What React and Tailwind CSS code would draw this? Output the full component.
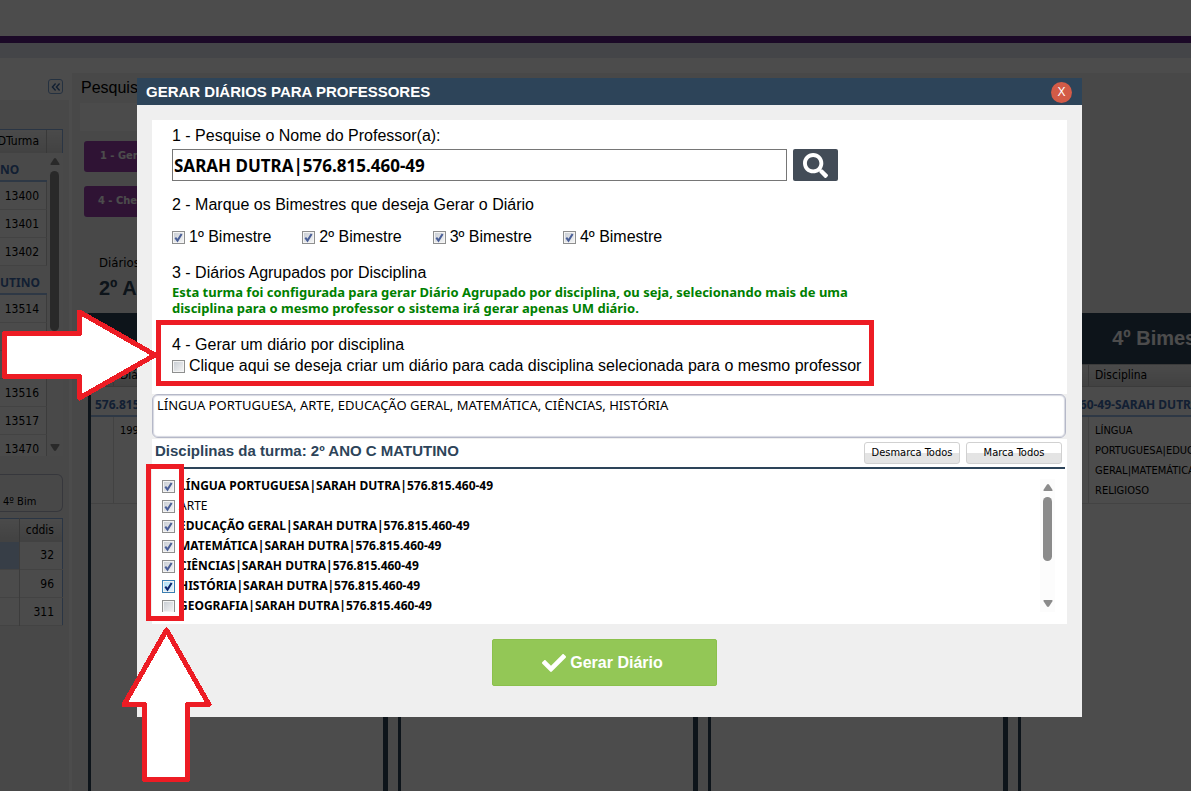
import { useState } from "react";
import { FaCheck, FaSearch } from "react-icons/fa";
import clsx from "clsx";

const bimestres = ["1º Bimestre", "2º Bimestre", "3º Bimestre", "4º Bimestre"];

const professor = "SARAH DUTRA|576.815.460-49";

const disciplinas = [
  { name: "LÍNGUA PORTUGUESA", professor, checked: true },
  { name: "ARTE", checked: true },
  { name: "EDUCAÇÃO GERAL", professor, checked: true },
  { name: "MATEMÁTICA", professor, checked: true },
  { name: "CIÊNCIAS", professor, checked: true },
  { name: "HISTÓRIA", professor, checked: true, active: true },
  { name: "GEOGRAFIA", professor, checked: false },
];

const turmas = [
  { turno: "MATUTINO", short: "NO", ids: ["13400", "13401", "13402"] },
  { turno: "VESPERTINO", short: "UTINO", ids: ["13514", "", "", "13516", "13517", "13470"] },
];

/* ================= CHECKBOX ================= */
const Checkbox = ({ id, defaultChecked, active }) => (
  <span className="relative block size-[13px] shrink-0">
    <input
      id={id}
      type="checkbox"
      defaultChecked={defaultChecked}
      className={clsx(
        "peer block size-[13px] appearance-none border bg-linear-to-br shadow-[inset_0_0_0_1px_#f4f4f4]",
        active
          ? "border-[#3c7fb1] from-[#a9dcf6] to-[#e3f5fd]"
          : "border-[#8e8f8f] from-[#c6cbd2] to-[#f6f6f6]"
      )}
    />
    <svg
      viewBox="0 0 13 13"
      className={clsx(
        "pointer-events-none absolute inset-0 hidden size-[13px] peer-checked:block",
        active ? "text-[#0a246e]" : "text-[#4a5f97]"
      )}
    >
      <path
        d="M3.3 6.6 L5.5 9.6 L9.6 3"
        fill="none"
        stroke="currentColor"
        strokeWidth="2"
      />
    </svg>
  </span>
);

const ScrollBar = ({ className, thumb }) => (
  <div className={clsx("flex w-[15px] shrink-0 flex-col items-center bg-[#fcfcfc] py-[5px]", className)}>
    <svg viewBox="0 0 10 7" className="h-[7px] w-[10px] fill-[#8b8b8b]">
      <path d="M5 0 L6 .6 L9.6 6 Q9.6 7 9 7 H1 Q.4 7 .4 6 L4 .6Z" />
    </svg>
    <div className={clsx("mt-1.5 w-[9px] rounded-full bg-[#8b8b8b]", thumb)} />
    <svg viewBox="0 0 10 7" className="mt-auto h-[7px] w-[10px] fill-[#8b8b8b]">
      <path d="M5 7 L6 6.4 L9.6 1 Q9.6 0 9 0 H1 Q.4 0 .4 1 L4 6.4Z" />
    </svg>
  </div>
);

/* ================= SIDEBAR ================= */
const Sidebar = () => (
  <aside className="flex w-[69px] shrink-0 flex-col bg-[#f0f0f0] text-xs">
    <div className="flex h-[27px] items-center justify-end bg-white pr-1.5">
      <button
        aria-label="Recolher"
        className="flex size-[15px] items-center justify-center rounded-[3px] border border-[#7ba3d6]"
      >
        <svg viewBox="0 0 10 10" className="size-[10px] fill-none stroke-[#3c69a6] stroke-[1.4]">
          <path d="M4.6 1.5 L1.4 5 L4.6 8.5 M8.6 1.5 L5.4 5 L8.6 8.5" />
        </svg>
      </button>
    </div>

    {/* Turmas */}
    <div className="mt-[29px] mr-1.5 border-t border-r border-[#8db2e3] bg-white">
      <div className="flex h-[23px] bg-linear-to-b from-[#f9f9f9] to-[#dcdcdc] leading-[23px]">
        <div className="flex w-[47px] justify-end overflow-hidden border-r border-[#c0c0c0] pr-[7px]">
          IDTurma
        </div>
      </div>
    </div>
    <div className="mr-1.5 flex h-[303px] overflow-hidden bg-[#f5f5f5]">
      <div className="w-[47px] shrink-0">
        {turmas.map((group) => (
          <div key={group.turno}>
            <div className="flex h-[29px] items-end border-b-2 border-[#99bbe8] pb-0.5 font-['Noto_Sans',sans-serif] text-xs font-bold text-[#3e6aaa]">
              {group.short}
            </div>
            {group.ids.map((id, i) => (
              <div
                key={i}
                className="h-7 border-r border-b border-r-[#c8c8c8] border-b-[#e2e2e2] bg-[#fafafa] pr-[7px] text-right leading-7"
              >
                {id}
              </div>
            ))}
          </div>
        ))}
      </div>
      <ScrollBar className="bg-transparent" thumb="h-[160px]" />
    </div>

    <div className="mt-[18px] mr-1.5 flex h-[38px] items-end rounded-r-md border-t border-r border-b border-[#b5b8c8] pb-px pl-[3px] text-[11px]">
      4º Bim
    </div>

    {/* Disciplinas da turma */}
    <table className="mt-1.5 mr-1.5 border-t border-r border-[#8db2e3]">
      <thead>
        <tr className="h-[23px] bg-linear-to-b from-[#f9f9f9] to-[#dcdcdc]">
          <th className="w-[19px] border-r border-[#c0c0c0]" />
          <th className="pr-2 text-right font-normal">cddis</th>
        </tr>
      </thead>
      <tbody>
        {[32, 96, 311].map((cd, i) => (
          <tr key={cd} className="h-7 border-b border-[#e0e0e0] bg-[#fafafa]">
            <td className={clsx("border-r border-[#c8c8c8]", i === 0 && "bg-[#b8cfee]")} />
            <td className="pr-2 text-right">{cd}</td>
          </tr>
        ))}
      </tbody>
    </table>
  </aside>
);

/* ================= CARD BIMESTRE ================= */
const BimestreCard = ({ title }) => (
  <section className="w-[300px] shrink-0 border-r-[5px] border-l-[3px] border-[#2d4459] bg-white text-[11px]">
    <h2 className="h-[51px] bg-[#2d4459] text-center font-['Liberation_Sans',sans-serif] text-xl leading-[50px] font-bold text-white">
      {title}
    </h2>
    <div className="flex h-[23px] border-t border-b border-[#c5c5c5] bg-linear-to-b from-[#f9f9f9] to-[#dcdcdc] text-xs leading-[21px]">
      <span className="w-[23px] border-r border-[#c0c0c0]" />
      <span className="w-[45px] border-r border-[#c0c0c0] pl-1.5">Diário</span>
      <span className="pl-1.5">Disciplina</span>
    </div>
    <p className="h-[30px] overflow-hidden border-b-2 border-[#99bbe8] bg-[#fafafa] pl-1 font-['Noto_Sans',sans-serif] text-xs leading-9 font-bold whitespace-nowrap text-[#3e6aaa]">
      576.815.460-49-SARAH DUTRA
    </p>
    <div className="flex h-[87px] border-b border-[#e0e0e0] leading-5">
      <span className="w-[23px] border-r border-[#dcdcdc]" />
      <span className="w-[45px] overflow-hidden border-r border-[#dcdcdc] pt-1 pl-1.5">19983</span>
      <p className="flex-1 pt-1 pl-1.5">
        LÍNGUA
        <br />
        PORTUGUESA|EDUCAÇÃO
        <br />
        GERAL|MATEMÁTICA|ENSINO
        <br />
        RELIGIOSO
      </p>
    </div>
  </section>
);

const Background = () => (
  <div className="flex h-full flex-col bg-white text-black">
    <div className="h-9" />
    <div className="h-[7px] bg-[#5b2182]" />
    <div className="h-[15px] bg-[#e3e6f1]" />
    <div className="h-[15px]" />
    <div className="flex min-h-0 flex-1">
      <Sidebar />
      <main className="ml-[3px] flex min-w-0 flex-1 flex-col bg-[#f0f0f0]">
        <h1 className="h-[30px] pl-[9px] font-['Liberation_Sans',sans-serif] text-base leading-[30px]">
          Pesquisar
        </h1>
        <div className="mx-2 h-7 w-80 bg-[#fcfcfc]" />
        <div className="mt-2.5 ml-3 flex flex-col items-start gap-3.5 text-[11px] font-bold text-white">
          <button className="h-[31px] rounded-[3px] bg-[#9e40b0] px-4">1 - Gerar Diários</button>
          <button className="h-[31px] rounded-[3px] bg-[#9e40b0] px-3.5">4 - Checar Diários</button>
        </div>
        <p className="mt-[38px] ml-[27px] text-[13px] leading-4">Diários da turma</p>
        <p className="mt-[3px] ml-[27px] h-[39px] font-['Liberation_Sans',sans-serif] text-xl font-bold text-[#2d4459]">
          2º ANO C MATUTINO
        </p>
        <div className="flex min-h-0 flex-1 gap-2.5 overflow-hidden pl-4">
          {bimestres.map((b) => (
            <BimestreCard key={b} title={b} />
          ))}
        </div>
      </main>
    </div>
  </div>
);

/* ================= MODAL ================= */
const DiarioModal = () => {
  const [nome, setNome] = useState("SARAH DUTRA|576.815.460-49");

  return (
    <div
      role="dialog"
      aria-labelledby="modal-title"
      className="relative mr-[109px] ml-[137px] bg-[#efefef] text-base text-black"
    >
      <header className="flex h-[27px] items-center justify-between bg-[#2d4459] pt-px pr-2.5 pl-[9px] text-white">
        <h2 id="modal-title" className="text-[15px] font-bold">
          GERAR DIÁRIOS PARA PROFESSORES
        </h2>
        <button className="size-[21px] rounded-full bg-[#d35b47] text-xs leading-[21px]">X</button>
      </header>

      <div className="px-[15px] pt-[15px]">
        <div className="bg-white">
          <div className="px-5 pt-1.5 pb-[17px] leading-5">
            <label htmlFor="professor" className="block">
              1 - Pesquise o Nome do Professor(a):
            </label>
            <div className="mt-[3px] flex gap-1.5">
              <input
                id="professor"
                value={nome}
                onChange={(e) => setNome(e.target.value)}
                className="h-8 w-[615px] border border-[#767676] px-px font-['Noto_Sans',sans-serif] text-[17px] font-bold"
              />
              <button
                aria-label="Pesquisar"
                className="flex h-8 w-[45px] items-center justify-center rounded-[2px] bg-[#434c57] text-white"
              >
                <FaSearch className="size-[25px]" />
              </button>
            </div>

            <p className="mt-3.5">2 - Marque os Bimestres que deseja Gerar o Diário</p>
            <div className="mt-3 flex gap-[31px]">
              {bimestres.map((b, i) => (
                <label key={b} htmlFor={`bim-${i}`} className="flex items-center gap-1">
                  <Checkbox id={`bim-${i}`} defaultChecked />
                  {b}
                </label>
              ))}
            </div>

            <p className="mt-4">3 - Diários Agrupados por Disciplina</p>
            <p className="mt-px w-[700px] font-['Noto_Sans',sans-serif] text-[13px] leading-4 font-bold text-[#008000]">
              Esta turma foi configurada para gerar Diário Agrupado por disciplina, ou seja, selecionando mais de uma
              disciplina para o mesmo professor o sistema irá gerar apenas UM diário.
            </p>

            <div className="relative mt-[19px] w-[698px] pb-px">
              <p>4 - Gerar um diário por disciplina</p>
              <label htmlFor="por-disciplina" className="mt-px flex items-center gap-1">
                <Checkbox id="por-disciplina" />
                Clique aqui se deseja criar um diário para cada disciplina selecionada para o mesmo professor
              </label>
              <div className="pointer-events-none absolute -top-[15px] -right-1 -bottom-[9px] -left-4 border-5 border-[#ed1c24]" />
            </div>
          </div>

          <div className="bg-[#efefef] pr-px pb-px">
            <textarea
              aria-label="Disciplinas selecionadas"
              defaultValue="LÍNGUA PORTUGUESA, ARTE, EDUCAÇÃO GERAL, MATEMÁTICA, CIÊNCIAS, HISTÓRIA"
              className="block h-11 w-full resize-none rounded-md border border-[#b5b8c8] bg-white px-1 py-0.5 font-['Noto_Sans',sans-serif] text-[13px] leading-4 shadow-[inset_0_0_1px_1px_#d5d7e0]"
            />
          </div>

          <div className="mr-0.5 flex h-[30px] items-start gap-1.5 border-b-2 border-[#2d4459] pt-[3px] pr-[3px] pl-[3px]">
            <h3 className="mr-auto text-[15px] leading-[18px] font-bold text-[#2d4459]">
              Disciplinas da turma: 2º ANO C MATUTINO
            </h3>
            {["Desmarca Todos", "Marca Todos"].map((text) => (
              <button
                key={text}
                className="h-[22px] w-24 rounded-[3px] border border-[#d1d1d1] bg-linear-to-b from-white from-50% to-[#e4e4e4] to-50% font-['DejaVu_Sans_Condensed','Noto_Sans',sans-serif] text-[11px] whitespace-nowrap"
              >
                {text}
              </button>
            ))}
          </div>

          <div className="relative pt-[7px] pr-3 pb-3 pl-2.5">
            <div className="flex h-[136px] overflow-hidden">
              <ul className="flex-1 font-['Noto_Sans',sans-serif] text-xs">
                {disciplinas.map((d) => (
                  <li key={d.name}>
                    <label
                      htmlFor={d.name}
                      className={clsx("flex h-5 items-center gap-1", d.professor && "font-bold")}
                    >
                      <Checkbox id={d.name} defaultChecked={d.checked} active={d.active} />
                      {d.professor ? `${d.name}|${d.professor}` : d.name}
                    </label>
                  </li>
                ))}
              </ul>
              <ScrollBar className="mt-[3px]" thumb="h-16" />
            </div>
            <div className="pointer-events-none absolute -top-[5px] bottom-[3px] -left-1.5 w-[38px] border-5 border-[#ed1c24]" />
          </div>
        </div>

        <div className="flex justify-center pt-[15px] pr-2.5 pb-[31px]">
          <button className="flex h-[47px] w-[225px] items-center justify-center gap-1 rounded-[2px] border border-[#8bc04c] bg-[#93c756] pr-1 font-bold text-white">
            <FaCheck className="size-6" />
            Gerar Diário
          </button>
        </div>
      </div>
    </div>
  );
};

/* Red arrows pointing at the option box and at the checkbox column */
const Arrows = () => (
  <svg
    width="220"
    height="790"
    viewBox="0 0 220 790"
    shapeRendering="crispEdges"
    className="pointer-events-none absolute top-0 left-0 fill-white stroke-[#ed1c24] stroke-5"
    strokeLinejoin="round"
  >
    <path d="M4.5 333.5 H79.5 V312 L155 355 L79.5 398 V376.5 H4.5 Z" />
    <path d="M166.5 630 L209 704.5 H187.5 V779.5 H144.5 V704.5 H124 Z" />
  </svg>
);

export default function App() {
  return (
    <div className="relative h-screen overflow-hidden font-['DejaVu_Sans_Condensed','Noto_Sans',sans-serif]">
      <Background />
      <div className="absolute inset-0 bg-black/70 pt-[78px] font-['Liberation_Sans',sans-serif]">
        <DiarioModal />
      </div>
      <Arrows />
    </div>
  );
}
